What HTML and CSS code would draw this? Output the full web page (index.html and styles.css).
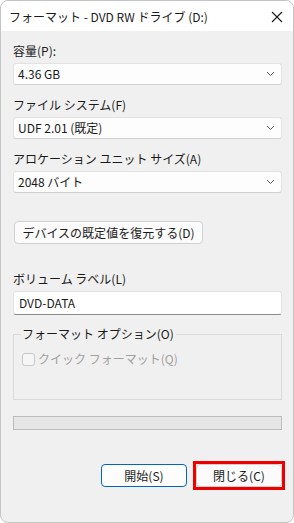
FILE: index.html
```html
<!DOCTYPE html>
<html lang="ja">
<head>
    <meta charset="UTF-8">
    <meta name="viewport" content="width=device-width, initial-scale=1.0">
    <title>フォーマット - DVD RW ドライブ (D:)</title>
    <link rel="stylesheet" href="styles.css">
</head>
<body>
    <div class="window">
        <div class="titlebar">
            <span class="title">フォーマット - DVD RW ドライブ (D:)</span>
            <svg class="close-icon" width="12" height="12" viewBox="0 0 12 12">
                <path d="M1 1 L11 11 M11 1 L1 11" stroke="#1a1a1a" stroke-width="1.1" fill="none"/>
            </svg>
        </div>

        <div class="content">
            <div class="label first">容量(P):</div>
            <div class="combo">
                <span>4.36 GB</span>
                <svg class="chevron" width="9" height="6" viewBox="0 0 9 6"><path d="M1 1 L4.5 4.5 L8 1" stroke="#5a5a5a" stroke-width="1" fill="none"/></svg>
            </div>

            <div class="label">ファイル システム(F)</div>
            <div class="combo">
                <span>UDF 2.01 (既定)</span>
                <svg class="chevron" width="9" height="6" viewBox="0 0 9 6"><path d="M1 1 L4.5 4.5 L8 1" stroke="#5a5a5a" stroke-width="1" fill="none"/></svg>
            </div>

            <div class="label">アロケーション ユニット サイズ(A)</div>
            <div class="combo">
                <span>2048 バイト</span>
                <svg class="chevron" width="9" height="6" viewBox="0 0 9 6"><path d="M1 1 L4.5 4.5 L8 1" stroke="#5a5a5a" stroke-width="1" fill="none"/></svg>
            </div>

            <button class="btn restore">デバイスの既定値を復元する(D)</button>

            <div class="label volume">ボリューム ラベル(L)</div>
            <div class="textbox">DVD-DATA</div>

            <fieldset class="group">
                <legend>フォーマット オプション(O)</legend>
                <label class="check">
                    <span class="box"></span>
                    <span>クイック フォーマット(Q)</span>
                </label>
            </fieldset>

            <div class="progress"></div>

            <div class="actions">
                <button class="btn primary">開始(S)</button>
                <div class="highlight">
                    <button class="btn">閉じる(C)</button>
                </div>
            </div>
        </div>
    </div>
</body>
</html>
```

FILE: styles.css
```css
html, body {
    margin: 0;
    padding: 0;
    background: #ffffff;
}
body {
    font-family: "Noto Sans CJK JP", "Noto Sans", sans-serif;
    font-size: 12px;
    color: #1a1a1a;
}
.window {
    width: 292px;
    height: 521px;
    border: 1px solid #c4c4c4;
    border-radius: 8px;
    background-color: #f0f0f0;
    overflow: hidden;
}
.titlebar {
    height: 30px;
    background-color: #fff;
    display: flex;
    align-items: center;
    justify-content: space-between;
    padding: 0 10px 0 8px;
}
.title {
    line-height: 16px;
    margin-top: 2px;
}
.close-icon {
    display: block;
    margin-top: 1px;
}
.content {
    padding: 0 11px 0 12px;
}
.label {
    line-height: 16px;
    height: 16px;
    margin-top: 12px;
    margin-bottom: 4px;
}
.combo {
    height: 20px;
    border: 1px solid #e2e2e2;
    border-bottom-color: #d0d0d0;
    border-radius: 3px;
    background-color: #fdfdfd;
    display: flex;
    align-items: center;
    justify-content: space-between;
    padding: 0 6px 0 4px;
}
.combo span {
    line-height: 16px;
}
.btn {
    font-family: inherit;
    font-size: 12px;
    color: #1a1a1a;
    background-color: #fbfbfb;
    border: 1px solid #d0d0d0;
    border-radius: 4px;
    padding: 0;
    height: 23px;
    line-height: 16px;
}
.restore {
    display: block;
    width: 189px;
    margin: 28px 0 0 1px;
}
.label.volume {
    margin-top: 27px;
}
.textbox {
    height: 24px;
    box-sizing: border-box;
    border: 1px solid #e2e2e2;
    border-bottom-color: #8a8a8a;
    border-radius: 3px;
    background-color: #fff;
    padding: 0 5px;
    line-height: 22px;
}
.group {
    margin: 11px 0 0 0;
    padding: 9px 8px 0 8px;
    border: 1px solid #dadada;
    height: 74px;
    box-sizing: border-box;
}
.group legend {
    padding: 0 2px 0 1px;
    margin-left: -1px;
    line-height: 16px;
}
.check {
    display: flex;
    align-items: center;
    gap: 3px;
    color: #a0a0a0;
    line-height: 16px;
}
.box {
    width: 11px;
    height: 11px;
    border: 1px solid #c8c8c8;
    border-radius: 3px;
    background-color: #f6f6f6;
}
.progress {
    margin-top: 16px;
    height: 12px;
    border: 1px solid #bcbcbc;
    background-color: #e6e6e6;
}
.actions {
    display: flex;
    justify-content: flex-end;
    align-items: center;
    gap: 6px;
    margin-top: 31px;
    margin-right: -3px;
}
.actions .btn {
    display: block;
    width: 86px;
}
.primary {
    border-color: #0067c0;
    background-color: #fdfdfd;
}
.highlight {
    border: 3px solid #ee0000;
}
```
